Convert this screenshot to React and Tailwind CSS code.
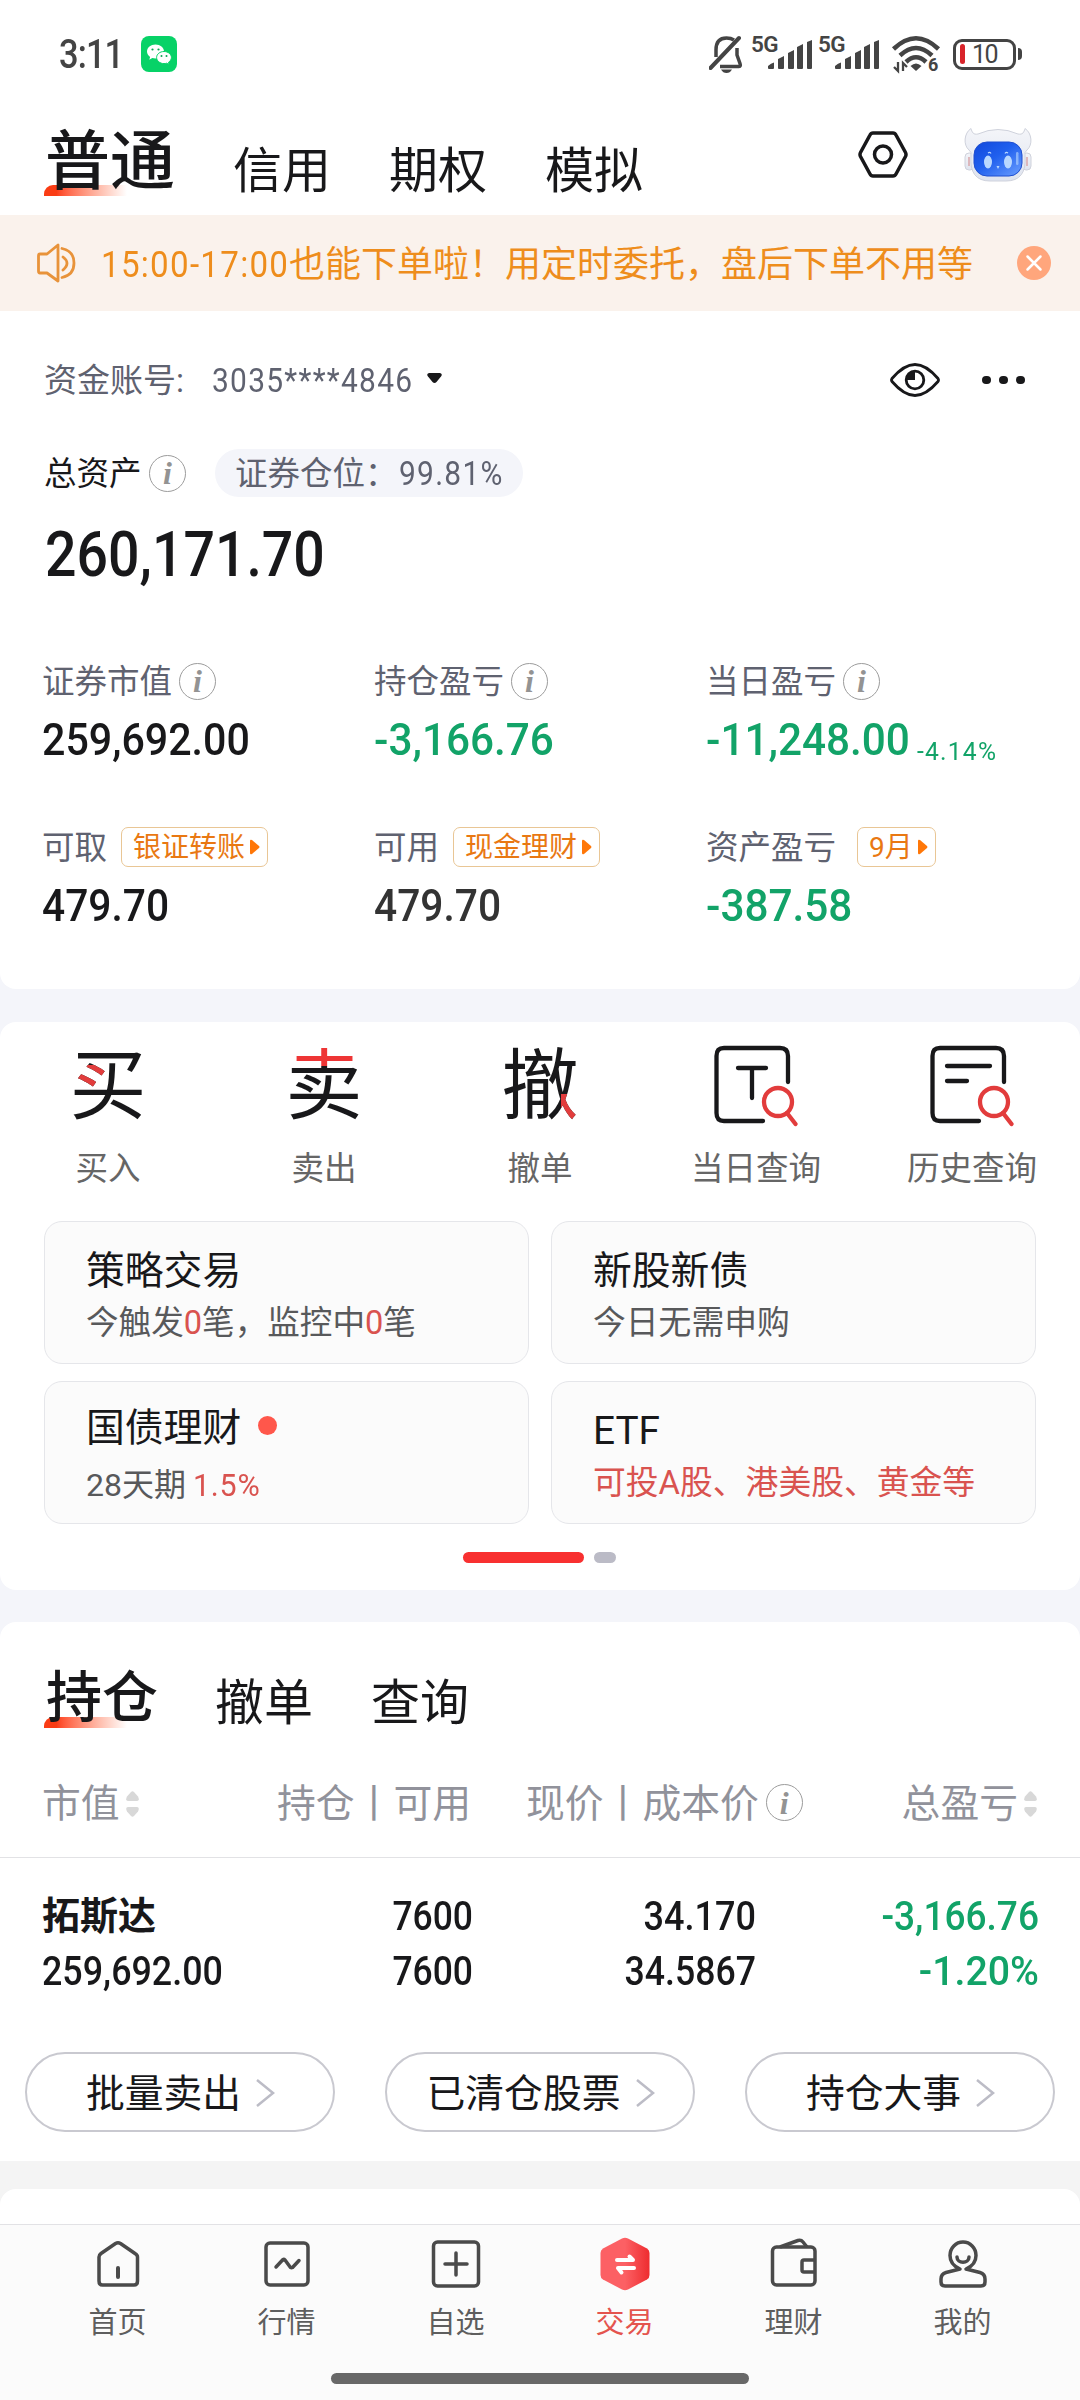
import React from "react";
import clsx from "clsx";

const summary = [
  { label: "证券市值", info: true, value: "259,692.00", color: "text-[#18181a]", narrow: "scale-x-[.915]" },
  { label: "持仓盈亏", info: true, value: "-3,166.76", color: "text-[#12a368]", narrow: "scale-x-[.94]" },
  { label: "当日盈亏", info: true, value: "-11,248.00", color: "text-[#12a368]", narrow: "scale-x-[.94]", extra: "-4.14%" },
  { label: "可取", tag: "银证转账", value: "479.70", color: "text-[#18181a]", narrow: "scale-x-[.905]" },
  { label: "可用", tag: "现金理财", value: "479.70", color: "text-[#333333]", narrow: "scale-x-[.905]" },
  { label: "资产盈亏", tag: "9月", value: "-387.58", color: "text-[#12a368]", narrow: "scale-x-[.94]" },
];

// Condensed number, the origin class decides which edge stays put
const Num = ({ children, className }) => (
  <span className={clsx("inline-block whitespace-nowrap", className)}>{children}</span>
);

const InfoIcon = ({ className }) => (
  <span
    className={clsx(
      "flex h-[37px] w-[37px] shrink-0 items-center justify-center rounded-full border-[1.5px] border-[#9c9c9c] font-['Liberation_Serif',serif] text-[32px] leading-none font-bold text-[#939393] italic",
      className
    )}
  >
    i
  </span>
);

const Sorter = () => (
  <svg className="ml-[6px] h-[26px] w-[13px] shrink-0" viewBox="0 0 13 26" fill="#d8d8d8">
    <path d="M5 1Q6.500-.5 8 1L12 5.500Q14 9.500 11 10H2Q-1 9.500 1 5.500Z" />
    <path d="M5 25Q6.500 26.500 8 25L12 20.500Q14 16.500 11 16H2Q-1 16.500 1 20.500Z" />
  </svg>
);

const Signal = () => (
  <span className="flex">
    <span className="-ml-px h-9 w-[29px] text-[22.500px] leading-[17px] font-semibold tracking-[-0.5px]">5G</span>
    <svg className="-ml-3 h-9 w-[45px]" viewBox="0 0 45 36" fill="#444444">
      <path d="M0 32V30Q3 27 6 26.500V32Q6 33 5 33H1Q0 33 0 32ZM10 23L16 20V32Q16 33 15 33H11Q10 33 10 32ZM20 17L26 14V32Q26 33 25 33H21Q20 33 20 32ZM29 11L35 8V32Q35 33 34 33H30Q29 33 29 32ZM39 6L44 4V32Q44 33 43 33H40Q39 33 39 32Z" />
    </svg>
  </span>
);

const StatusBar = () => (
  <div className="flex h-[108px] items-center pr-[58px] pl-[59px] text-[#444444]">
    <Num className="mt-[2px] w-[82px] origin-left scale-x-[.86] text-[40px] leading-[44px] font-medium tracking-[-1px]">3:11</Num>
    <svg className="h-9 w-9" viewBox="0 0 36 36">
      <rect width="36" height="36" rx="8" fill="#07d267" />
      <path
        d="M14.500 8.500C9.800 8.500 6 11.600 6 15.600c0 2.200 1.200 4.100 3.100 5.400l-.8 2.700 3-1.600c1 .3 2 .4 3.200.4 4.700 0 8.500-3.100 8.500-7s-3.800-7-8.500-7Z"
        fill="#fff"
      />
      <path
        d="M23 15.500c-4.100 0-7.400 2.700-7.400 6s3.300 6.100 7.400 6.100c.9 0 1.800-.1 2.600-.4l2.500 1.300-.6-2.200c1.800-1.200 2.900-2.900 2.900-4.800 0-3.300-3.300-6-7.400-6Z"
        fill="#fff"
        stroke="#07d267"
      />
      <g fill="#07a552">
        <circle cx="11.500" cy="13.500" r="1.100" />
        <circle cx="17.500" cy="13.500" r="1.100" />
        <circle cx="20.500" cy="20" r="1" />
        <circle cx="25.500" cy="20" r="1" />
      </g>
    </svg>
    <div className="ml-auto flex items-center">
      <svg className="mr-[8px] h-[38px] w-[35px]" viewBox="0 0 35 38" fill="none" stroke="#444444">
        <path d="M1.500 33L30 3" strokeWidth="4" strokeLinecap="round" />
        <path d="M7 22V15C7 6 11 3 17.500 3Q22 3 25 5" strokeWidth="3.500" />
        <path d="M28 13V20L31 28.500Q32 31.500 30 31.500H11" strokeWidth="3.500" />
        <path d="M12 34.500H23Q21 38 17.500 38Q14 38 12 34.500Z" fill="#444444" stroke="none" />
      </svg>
      <Signal />
      <span className="w-[6px]" />
      <Signal />
      <svg className="ml-[12px] h-[38px] w-[50px] overflow-visible" viewBox="0 0 50 38" fill="none" stroke="#444444" strokeWidth="4.500">
        <path d="M1.500 14Q24-7.500 46.500 14" />
        <path d="M8 20.500Q24 5.500 40 20.500" />
        <path d="M14 27Q24 17.500 34 27" />
        <path d="M18.500 31Q24 26 29.500 31L24 36Z" fill="#444444" stroke="none" />
        <path d="M6 27V36L2 32M11 36V28L15 32" strokeWidth="2.300" />
        <text x="36" y="36" fill="#444444" stroke="#fff" strokeWidth="3" paintOrder="stroke" fontSize="18" fontWeight="700">6</text>
      </svg>
      <span className="ml-[11px] flex h-[31px] w-[63px] items-center rounded-[9px] border-[3px] border-[#444444] pl-1">
        <span className="h-5 w-[5px] rounded-sm bg-[#d8232a]" />
        <span className="mt-[2px] ml-[7px] text-[25px] leading-[28px] tracking-[-1.5px]">10</span>
      </span>
      <span className="ml-[2px] h-3 w-[4px] rounded-r-md bg-[#444444]" />
    </div>
  </div>
);

const Underline = ({ className }) => (
  <span
    className={clsx(
      "absolute left-0 -z-10 h-[11px] w-[83px] rounded-tl-[9px] bg-linear-to-r from-[#fa3c14] from-15% to-white",
      className
    )}
  />
);

const Robot = () => (
  <svg className="h-[54px] w-[68px]" viewBox="0 0 68 54">
    <defs>
      <linearGradient id="shell" x1="0" y1="0" x2="0" y2="1">
        <stop offset="0" stopColor="#f4f5f9" />
        <stop offset="1" stopColor="#dfe4ef" />
      </linearGradient>
      <linearGradient id="visor" x1="0" y1="0" x2="1" y2="1">
        <stop offset="0" stopColor="#1148dc" />
        <stop offset=".45" stopColor="#2060ee" />
        <stop offset="1" stopColor="#6da0ff" />
      </linearGradient>
    </defs>
    <g fill="url(#shell)" stroke="#cfd2dc" strokeWidth="1">
      <rect x="1" y="25" width="9" height="17" rx="4" />
      <rect x="58" y="25" width="9" height="17" rx="4" />
      <path d="M7 .5C0 5-1 17 5 22Q8 24 7 28Q5 53 26 53H42Q63 53 61 28Q60 24 63 22C69 17 68 5 61 .5C60 4 59 7 54 6Q34-3 14 6C9 7 8 4 7 .5Z" />
    </g>
    <rect x="10" y="14" width="48" height="34" rx="13" fill="url(#visor)" stroke="#1f4fd0" />
    <g fill="#b9d8ff">
      <ellipse cx="24" cy="34" rx="4" ry="6.500" />
      <ellipse cx="44" cy="34" rx="4" ry="6.500" />
      <path d="M32.500 38h3l-1.500 3Z" />
      <rect x="52" y="24" width="2.500" height="13" rx="1.200" opacity=".6" />
    </g>
    <path d="M24 25q2-1.500 3 .5M41 25.500q1-2 3-.5" stroke="#b9d8ff" fill="none" strokeWidth="1.200" />
    <path d="M5 29V38M63 29V38" stroke="#d9a7ab" strokeWidth="1.500" />
  </svg>
);

const Header = () => (
  <div className="flex h-[107px] pl-[45px] text-[#18181a]">
    <div className="relative z-0 -ml-px w-[189px] pt-[22px] pl-px text-[65px] leading-[65px] font-medium">
      普通
      <Underline className="top-[77px]" />
    </div>
    <div className="flex gap-[58px] pt-[39px] text-[49px] leading-[49px]">
      <span>信用</span>
      <span>期权</span>
      <span>模拟</span>
    </div>
    <svg className="mt-[23px] ml-auto h-[47px] w-[50px]" viewBox="0 0 50 47" fill="none" stroke="#18181a" strokeWidth="3.500">
      <path d="M15 2H35Q37 2 38 4L47.500 21.500Q48.500 23.500 47.500 25.500L38 43Q37 45 35 45H15Q13 45 12 43L2.500 25.500Q1.500 23.500 2.500 21.500L12 4Q13 2 15 2Z" />
      <circle cx="25" cy="23.500" r="8.500" />
    </svg>
    <div className="mt-5 mr-[48px] ml-[56px]">
      <Robot />
    </div>
  </div>
);

const Banner = () => (
  <div className="flex h-24 items-center bg-[#faf2ec] pr-[29px] pl-[37px] text-[#ee8d1c]">
    <svg className="h-10 w-[39px]" viewBox="0 0 39 40" fill="none" stroke="#e8933a" strokeWidth="2.800" strokeLinejoin="round">
      <path d="M21 2V38L10 30H3Q1.500 30 1.500 28V13Q1.500 11 3 11H10Z" />
      <path d="M26 14Q34 20 26 27M25 5.500Q37 8 37 20Q37 32 25 34.500" strokeLinecap="round" />
    </svg>
    <div className="mt-1 ml-[25px] flex text-[36px] leading-[40px] whitespace-nowrap">
      <Num className="w-[188px] origin-left scale-x-[.92] tracking-[1.4px]">15:00-17:00</Num>
      <span>也能下单啦！用定时委托，盘后下单不用等</span>
    </div>
    <svg className="ml-auto h-[34px] w-[34px]" viewBox="0 0 34 34">
      <circle cx="17" cy="17" r="17" fill="#ffa67c" />
      <path d="M10.500 10.500L23.500 23.500M23.500 10.500L10.500 23.500" stroke="#fff" strokeWidth="2.500" strokeLinecap="round" />
    </svg>
  </div>
);

const Tag = ({ children }) => (
  <span className="flex h-10 items-center rounded-[7px] border-[1.5px] border-[#e9c695] pr-[7px] pl-[11px] text-[28px] leading-[38px] text-[#e97812]">
    <span className="mt-[2px]">{children}</span>
    <svg className="ml-[5px] h-4 w-[10px]" viewBox="0 0 10 16" fill="#ff7708">
      <path d="M0 2Q0 0 2 1L9 7Q10 8 9 9L2 15Q0 16 0 14Z" />
    </svg>
  </span>
);

const Account = () => (
  <section className="h-[678px] rounded-b-2xl bg-white">
    <div className="flex h-[138px] items-center pr-[55px] pl-[44px] text-[33px] text-[#5f6270]">
      <span className="mt-[2px] w-[168px] whitespace-nowrap">资金账号:</span>
      <Num className="mt-[2px] w-[200px] origin-left scale-x-[.92] text-[32.500px] tracking-[1.4px]">3035****4846</Num>
      <svg className="mb-1 ml-[15px] h-[10px] w-[15px]" viewBox="0 0 15 10" fill="#18181a">
        <path d="M2 0H13Q16 1 14 3.500L9.500 9Q7.500 11 5.500 9L1 3.500Q-1 1 2 0Z" />
      </svg>
      <svg className="ml-auto h-[34px] w-[50px]" viewBox="0 0 50 34" fill="none" stroke="#18181a" strokeWidth="2.800">
        <path d="M2 15.500Q14 1.500 25 1.500T48 15.500Q49 17 48 18.500Q36 32.500 25 32.500T2 18.500Q1 17 2 15.500Z" />
        <circle cx="25" cy="17" r="8.800" />
        <path d="M25 17V8A9 9 0 0 0 16 17Z" fill="#18181a" stroke="none" />
      </svg>
      <span className="ml-[42px] flex gap-2">
        <i className="h-[8px] w-[9px] rounded-full bg-[#18181a]" />
        <i className="h-[8px] w-[9px] rounded-full bg-[#18181a]" />
        <i className="h-[8px] w-[9px] rounded-full bg-[#18181a]" />
      </span>
    </div>
    <div className="flex h-12 items-center pl-[44px] text-[32.500px] text-[#18181a]">
      <span className="mt-[3px] w-[105px]">总资产</span>
      <InfoIcon />
      <span className="ml-[29px] flex h-12 w-[308px] items-center rounded-full bg-[#f4f5fa] pt-[3px] pl-[20px] text-[#5f6270]">
        <span className="w-[164px]">证券仓位：</span>
        <Num className="origin-left scale-x-[.92] tracking-[1.4px]">99.81%</Num>
      </span>
    </div>
    <Num className="mt-[25px] ml-[45px] block origin-left scale-x-[.88] text-[63px] leading-[66px] font-medium text-[#18181a]">
      260,171.70
    </Num>
    <div className="mt-[73px] grid grid-cols-[332px_332px_1fr] gap-y-[62px] pl-[42px]">
      {summary.map((item) => (
        <div key={item.label} className="h-[104px]">
          <div className="flex h-10 items-center text-[32.500px] whitespace-nowrap text-[#5f6270]">
            <span className="mt-[3px]">{item.label}</span>
            {item.info && <InfoIcon className="ml-[7px]" />}
            {item.tag && (
              <span className={item.label.length > 2 ? "ml-[21px]" : "ml-[14px]"}>
                <Tag>{item.tag}</Tag>
              </span>
            )}
          </div>
          <div className={clsx("mt-[14px] flex h-[50px] items-center", item.color)}>
            <Num className={clsx("origin-left text-[45px] font-medium", item.narrow)}>{item.value}</Num>
            {item.extra && (
              <Num className="mt-[21px] -ml-[6px] origin-left scale-x-[.93] text-[26.500px] tracking-[1.3px]">{item.extra}</Num>
            )}
          </div>
        </div>
      ))}
    </div>
  </section>
);

const SearchLens = () => (
  <g stroke="#e23c3c">
    <circle cx="64" cy="58" r="14" />
    <path d="M73 69L81.500 80" />
  </g>
);

const iconGlyph = "bg-clip-text bg-no-repeat text-[77px] leading-[86px] text-transparent";

const actions = [
  {
    label: "买入",
    icon: (
      <span
        className={clsx(
          iconGlyph,
          "bg-[image:linear-gradient(#e23c3c,#e23c3c),linear-gradient(#18181a,#18181a)] bg-[length:36px_22px,100%_100%] bg-[position:0px_21px,0px_0px]"
        )}
      >
        买
      </span>
    ),
  },
  {
    label: "卖出",
    icon: <span className={clsx(iconGlyph, "bg-[image:linear-gradient(#ee3535_22px,#18181a_22px)]")}>卖</span>,
  },
  {
    label: "撤单",
    icon: (
      <span
        className={clsx(
          iconGlyph,
          "bg-[image:linear-gradient(#e23c3c,#e23c3c),linear-gradient(#18181a,#18181a)] bg-[length:18px_36px,100%_100%] bg-[position:100%_100%,0px_0px]"
        )}
      >
        撤
      </span>
    ),
  },
  {
    label: "当日查询",
    icon: (
      <svg className="h-[86px] w-[84px]" viewBox="0 0 84 86" fill="none" stroke="#18181a" strokeWidth="4.300" strokeLinecap="round">
        <path d="M74 38V12Q74 4 66 4H10Q2.500 4 2.500 12V69Q2.500 77 10 77H49" />
        <path d="M24 24H52M38 24V54" />
        <SearchLens />
      </svg>
    ),
  },
  {
    label: "历史查询",
    icon: (
      <svg className="h-[86px] w-[84px]" viewBox="0 0 84 86" fill="none" stroke="#18181a" strokeWidth="4.300" strokeLinecap="round">
        <path d="M74 38V12Q74 4 66 4H10Q2.500 4 2.500 12V69Q2.500 77 10 77H49" />
        <path d="M17 22H60M17 37H37" />
        <SearchLens />
      </svg>
    ),
  },
];

const Card = ({ title, dot, children, className }) => (
  <div className={clsx("h-[143px] rounded-[18px] border border-[#e5e6ea] bg-[#fbfbfb] pl-[41px]", className)}>
    <div className="flex h-10 items-center text-[38.800px] text-[#18181a]">
      {title}
      {dot && <i className="mb-[5px] ml-[17px] h-[19px] w-[19px] rounded-full bg-[#ff574b]" />}
    </div>
    {children}
  </div>
);

const Actions = () => (
  <section className="mt-[33px] h-[568px] rounded-2xl bg-white pt-[22px]">
    <div className="grid grid-cols-5">
      {actions.map((item) => (
        <div key={item.label} className="flex flex-col items-center">
          <span className="flex h-[86px] items-center">{item.icon}</span>
          <span className="mt-[19px] h-10 text-[32.500px] leading-[40px] text-[#666666]">{item.label}</span>
        </div>
      ))}
    </div>
    <div className="mx-[44px] mt-[32px] grid grid-cols-2 gap-x-[22px] gap-y-[17px] text-[32.800px] leading-[40px] whitespace-nowrap text-[#58595b]">
      <Card title="策略交易" className="pt-[29px]">
        <p className="mt-[12px] flex text-[32.600px]">
          今触发<Num className="text-[#d9534f]">0</Num>笔，监控中
          <Num className="text-[#d9534f]">0</Num>笔
        </p>
      </Card>
      <Card title="新股新债" className="pt-[29px]">
        <p className="mt-[12px]">今日无需申购</p>
      </Card>
      <Card title="国债理财" dot className="pt-[26px]">
        <p className="mt-[17px] flex text-[32px]">
          <Num>28</Num>天期
          <Num className="ml-[7px] origin-left scale-x-[.95] tracking-[0.8px] text-[#d9534f]">1.5%</Num>
        </p>
      </Card>
      <Card title="ETF" className="pt-[29px]">
        <p className="mt-[12px] text-[#d9534f]">可投A股、港美股、黄金等</p>
      </Card>
    </div>
    <div className="mt-[28px] mr-[2px] flex justify-center gap-[10px]">
      <i className="h-[11px] w-[121px] rounded-full bg-[#f83030]" />
      <i className="h-[11px] w-[22px] rounded-full bg-[#bbbbc6]" />
    </div>
  </section>
);

const Chevron = () => (
  <svg className="-mt-[2px] h-7 w-[19px]" viewBox="0 0 19 28" fill="none" stroke="#bcbcc6" strokeWidth="2.500">
    <path d="M1 1L17 14L1 27" />
  </svg>
);

const Holdings = () => (
  <section className="mt-8 h-[539px] rounded-t-2xl bg-white">
    <div className="flex h-[130px] pl-[44px] text-[#18181a]">
      <div className="relative z-0 w-[171px] pt-[48px] pl-[2px] text-[56px] leading-[56px] font-medium">
        持仓
        <Underline className="top-[95px]" />
      </div>
      <div className="flex gap-[58px] pt-[57px] text-[49px] leading-[49px]">
        <span>撤单</span>
        <span>查询</span>
      </div>
    </div>
    <div className="flex h-[106px] items-center border-b border-[#e2e2e5] pr-[43px] pb-[2px] pl-[42px] text-[38.800px] leading-[40px] whitespace-nowrap text-[#91929b]">
      <span className="flex w-[235px] items-center">
        市值
        <Sorter />
      </span>
      <span className="w-[249px]">持仓丨可用</span>
      <span>现价丨成本价</span>
      <InfoIcon className="-mt-[2px] ml-[7px]" />
      <span className="ml-auto flex items-center">
        总盈亏
        <Sorter />
      </span>
    </div>
    <div className="mt-[31px] grid grid-cols-[224px_207px_283px_283px] pl-[42px] text-[40.500px] leading-[55px] font-medium text-[#18181a]">
      <span className="text-[38px] font-bold">拓斯达</span>
      <Num className="origin-right scale-x-[.875] text-right">7600</Num>
      <Num className="origin-right scale-x-[.89] text-right">34.170</Num>
      <Num className="origin-right scale-x-[.915] text-right text-[#12a368]">-3,166.76</Num>
      <Num className="origin-left scale-x-[.885]">259,692.00</Num>
      <Num className="origin-right scale-x-[.875] text-right">7600</Num>
      <Num className="origin-right scale-x-[.88] text-right">34.5867</Num>
      <Num className="origin-right scale-x-[.97] text-right text-[#12a368]">-1.20%</Num>
    </div>
    <div className="mt-[53px] flex justify-between px-[25px] text-[38.800px] text-[#18181a]">
      {["批量卖出", "已清仓股票", "持仓大事"].map((text) => (
        <button
          key={text}
          className="flex h-20 w-[310px] items-center justify-center gap-[15px] rounded-full border-2 border-[#c9c9d0] pt-[4px] pl-px"
        >
          {text}
          <Chevron />
        </button>
      ))}
    </div>
  </section>
);

const navIcon = "h-[56px] w-[56px]";
const nav = [
  {
    label: "首页",
    icon: (
      <svg className={navIcon} viewBox="0 0 56 56" fill="none" stroke="#4a4a4a" strokeWidth="3.500" strokeLinejoin="round">
        <path d="M9 22Q9 20 11 18.500L25.500 8.500Q28 7 30.500 8.500L45 18.500Q47.500 20 47.500 22V46Q47.500 50 44 50H12.500Q9 50 9 46Z" />
        <path d="M28 33V42" strokeWidth="4" strokeLinecap="round" />
      </svg>
    ),
  },
  {
    label: "行情",
    icon: (
      <svg className={navIcon} viewBox="0 0 56 56" fill="none" stroke="#4a4a4a" strokeWidth="3.500" strokeLinejoin="round">
        <rect x="7" y="8" width="42" height="42" rx="4" />
        <path d="M17 32L24 24.500Q25 24 26 25L31.500 32.500Q32.500 33 33.500 32.500L40 25.500" strokeLinecap="round" />
      </svg>
    ),
  },
  {
    label: "自选",
    icon: (
      <svg className={navIcon} viewBox="0 0 56 56" fill="none" stroke="#4a4a4a" strokeWidth="3.500">
        <rect x="5.500" y="7" width="45" height="44" rx="4" />
        <path d="M17 29H39M28 18V40" strokeLinecap="round" />
      </svg>
    ),
  },
  {
    label: "交易",
    active: true,
    icon: (
      <svg className={navIcon} viewBox="0 0 56 56">
        <defs>
          <linearGradient id="trade">
            <stop offset=".5" stopColor="#fc6064" />
            <stop offset="1" stopColor="#ee2c2f" />
          </linearGradient>
        </defs>
        <path d="M25 3.500Q28 2 31 3.500L50 13.500Q52.500 15 52.500 18V40Q52.500 43 50 44.500L31 54.500Q28 56 25 54.500L6 44.500Q3.500 43 3.500 40V18Q3.500 15 6 13.500Z" fill="url(#trade)" />
        <path d="M20 25H36L32.500 21.500M37 33H21L24.500 37.500" fill="none" stroke="#fff" strokeWidth="4" strokeLinecap="round" strokeLinejoin="round" />
      </svg>
    ),
  },
  {
    label: "理财",
    icon: (
      <svg className={navIcon} viewBox="0 0 56 56" fill="none" stroke="#4a4a4a" strokeWidth="3.500" strokeLinejoin="round">
        <rect x="6.500" y="12" width="42.500" height="38" rx="4" />
        <path d="M14 12L32 5.500Q35 4.500 37 7L41 12" />
        <path d="M49 25H38Q36 25 36 27V35Q36 37 38 37H49" />
      </svg>
    ),
  },
  {
    label: "我的",
    icon: (
      <svg className={navIcon} viewBox="0 0 56 56" fill="none" stroke="#4a4a4a" strokeWidth="3.500" strokeLinecap="round" strokeLinejoin="round">
        <path d="M25 34C18 31 15 26 15 20.500A13 13.500 0 0 1 41 20.500C41 26 38 31 31 34L45 37.500Q50 39 50 44V47Q50 51 46 51H10Q6 51 6 47V44Q6 39 11 37.500Z" />
        <path d="M22 22C22 29 34 29 34 22" />
      </svg>
    ),
  },
];

const BottomNav = () => (
  <nav className="h-[176px] border-t border-[#e2e2e5] bg-[#fbfbfb] pt-[10px]">
    <div className="mx-[33px] grid grid-cols-6">
      {nav.map((item) => (
        <div key={item.label} className="flex flex-col items-center">
          {item.icon}
          <span
            className={clsx(
              "mt-[14px] text-[29px] leading-[36px]",
              item.active ? "text-[#e4544e]" : "text-[#5e5e5e]"
            )}
          >
            {item.label}
          </span>
        </div>
      ))}
    </div>
    <div className="mx-auto mt-[32px] h-[11px] w-[418px] rounded-full bg-[#686868]" />
  </nav>
);

const App = () => {
  return (
    <div className="h-[2400px] w-[1080px] overflow-hidden bg-[#f4f5fa] font-[Roboto,'Noto_Sans_CJK_SC',sans-serif]">
      <div className="bg-white">
        <StatusBar />
        <Header />
      </div>
      <Banner />
      <Account />
      <Actions />
      <Holdings />
      <div className="bg-[#f4f4f4] pt-7">
        <div className="h-[35px] rounded-t-2xl bg-white" />
      </div>
      <BottomNav />
    </div>
  );
};

export default App;
